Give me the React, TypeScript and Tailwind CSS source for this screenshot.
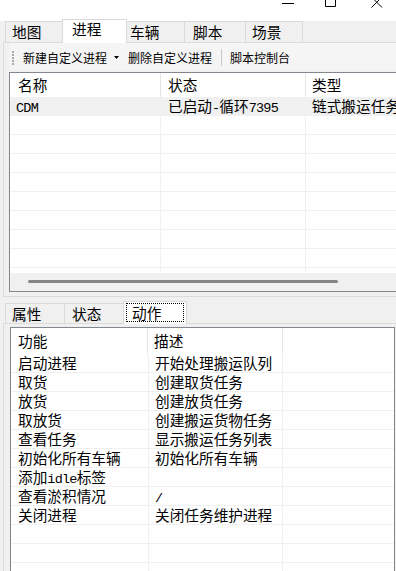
import React from "react";

// ---------------------------------------------------------------------------
// Data
// ---------------------------------------------------------------------------

const ACTIONS: [string, string][] = [
  ["启动进程", "开始处理搬运队列"],
  ["取货", "创建取货任务"],
  ["放货", "创建放货任务"],
  ["取放货", "创建搬运货物任务"],
  ["查看任务", "显示搬运任务列表"],
  ["初始化所有车辆", "初始化所有车辆"],
  ["添加idle标签", ""],
  ["查看淤积情况", "/"],
  ["关闭进程", "关闭任务维护进程"],
  ["", ""],
  ["", ""],
  ["", ""],
];

// ASCII runs are drawn in a half-width mono face, like SimSun
function Txt({ s }: { s: string }) {
  const parts = s.split(/([\x21-\x7e]+)/);
  return (
    <>
      {parts.map((p, i) =>
        i % 2 === 1 ? (
          <span key={i} className="font-['Liberation_Mono',monospace] text-[13.5px] tracking-[-0.77px] leading-[18px]">
            {p}
          </span>
        ) : (
          <React.Fragment key={i}>{p}</React.Fragment>
        ),
      )}
    </>
  );
}

// ---------------------------------------------------------------------------
// Pieces
// ---------------------------------------------------------------------------

function TitleButtons() {
  return (
    <div className="h-[21px] bg-white flex justify-end items-start pr-[13px] overflow-hidden">
      <svg width="12" height="8">
        <line x1="0" y1="3.5" x2="12" y2="3.5" stroke="#000" />
      </svg>
      <svg width="12" height="8" className="ml-[31px]">
        <path d="M0.5 -2 V6.5 H10.5 V-2" fill="none" stroke="#000" />
      </svg>
      <svg width="12" height="8" className="ml-[34px]">
        <path d="M0.5 -3 L11 7.5 M11 -3 L0.5 7.5" fill="none" stroke="#000" />
      </svg>
    </div>
  );
}

function Gripper() {
  return (
    <svg width="4" height="16" className="shrink-0">
      {[0, 1, 2, 3, 4].map((i) => (
        <rect key={i} x="1" y={i * 3 + 1} width="2" height="2" fill="#a8a8a8" />
      ))}
    </svg>
  );
}

// ---------------------------------------------------------------------------
// App
// ---------------------------------------------------------------------------

export default function App() {
  return (
    <div className="w-[396px] h-[571px] overflow-hidden bg-[#f0f0f0] text-black text-[14.67px] font-['Noto_Sans_CJK_SC','Noto_Sans',sans-serif]">
      <TitleButtons />

      {/* Upper tab strip */}
      <div className="flex items-start h-[21px] pl-[5px]">
        <div className="w-[60px] h-[21px] border border-b-0 border-[#d9d9d9] pl-[6px] leading-[20px]">地图</div>
        <div className="relative z-10 -ml-[3px] -mt-[2px] w-[65px] h-[24px] border border-b-0 border-[#d9d9d9] bg-white pl-[9px] leading-[18px]">
          进程
        </div>
        <div className="-ml-[2px] w-[60px] h-[21px] border border-b-0 border-[#d9d9d9] pl-[4px] leading-[20px]">车辆</div>
        <div className="-ml-px w-[62px] h-[21px] border border-b-0 border-[#d9d9d9] pl-[8px] leading-[20px]">脚本</div>
        <div className="-ml-px w-[58px] h-[21px] border border-b-0 border-[#d9d9d9] pl-[6px] leading-[20px]">场景</div>
      </div>

      {/* Upper tab page */}
      <div className="ml-[3px] h-[255px] border border-r-0 border-[#dcdcdc] flex flex-col">
        {/* Toolbar */}
        <div className="ml-[5px] h-[27px] shrink-0 flex items-center pt-[2px] bg-[#f5f5f5] text-[12px] whitespace-nowrap">
          <div className="ml-[2px]">
            <Gripper />
          </div>
          <span className="ml-[8px]">新建自定义进程</span>
          <svg width="6" height="4" className="ml-[7px] mt-[1px]">
            <path d="M0 0 H5 L2.5 3 Z" fill="#000" />
          </svg>
          <span className="ml-[8px]">删除自定义进程</span>
          <div className="ml-[9px] w-px h-[17px] bg-[#c8c8c8]" />
          <span className="ml-[8px]">脚本控制台</span>
        </div>

        {/* Process list */}
        <div className="ml-[5px] mt-[2px] h-[220px] shrink-0 border border-r-0 border-[#828790] bg-white flex flex-col">
          <div className="flex h-[24px] shrink-0 leading-[24px] whitespace-nowrap">
            <div className="w-[151px] shrink-0 border-r border-[#e5e5e5] pl-[8px]">名称</div>
            <div className="w-[145px] shrink-0 border-r border-[#e5e5e5] pl-[7px]">状态</div>
            <div className="pl-[6px]">类型</div>
          </div>
          <div className="h-[176px] shrink-0 overflow-hidden">
            {Array.from({ length: 10 }).map((_, r) => (
              <div
                key={r}
                className={[
                  "flex h-[19px] border-b border-[#f0f0f0] leading-[18px] whitespace-nowrap",
                  r === 0 ? "bg-[#f0f0f0]" : "",
                ].join(" ")}
              >
                <div className="w-[151px] shrink-0 border-r border-[#f0f0f0] pl-[6px]">
                  {r === 0 && <Txt s="CDM" />}
                </div>
                <div className="w-[145px] shrink-0 border-r border-[#f0f0f0] pl-[7px]">
                  {r === 0 && <Txt s="已启动-循环7395" />}
                </div>
                <div className="pl-[6px]">{r === 0 && "链式搬运任务"}</div>
              </div>
            ))}
          </div>
          {/* Horizontal scrollbar */}
          <div className="h-[18px] shrink-0 bg-[#f0f0f0] pt-[7px]">
            <div className="ml-[18px] w-[310px] h-[3px] rounded-full bg-[#858585]" />
          </div>
        </div>
      </div>

      {/* Lower tab strip */}
      <div className="flex items-start h-[20px] mt-[6px] pl-[5px]">
        <div className="w-[60px] h-[20px] border border-b-0 border-[#d9d9d9] pl-[6px] leading-[20px]">属性</div>
        <div className="-ml-px w-[61px] h-[20px] border border-b-0 border-[#d9d9d9] pl-[7px] leading-[20px]">状态</div>
        <div className="relative z-10 -ml-[2px] -mt-[2px] w-[64px] h-[23px] border border-b-0 border-[#d9d9d9] bg-white pt-px pl-[2px]">
          <div className="w-[58px] h-[19px] border border-dotted border-black pl-[5px] leading-[17px]">动作</div>
        </div>
      </div>

      {/* Lower tab page */}
      <div className="ml-[3px] border-t border-l border-[#dcdcdc] pt-[3px]">
        <div className="ml-[6px] mr-px border border-[#828790] bg-white">
          <div className="flex h-[26px] leading-[26px] whitespace-nowrap">
            <div className="w-[137px] shrink-0 border-r border-[#e5e5e5] pl-[7px]">功能</div>
            <div className="w-[135px] shrink-0 border-r border-[#e5e5e5] pl-[6px]">描述</div>
            <div />
          </div>
          {ACTIONS.map(([a, b], i) => (
            <div key={i} className="flex h-[19px] border-b border-[#f0f0f0] leading-[18px] whitespace-nowrap">
              <div className="w-[138px] shrink-0 border-r border-[#f0f0f0] pl-[7px]">
                <Txt s={a} />
              </div>
              <div className="w-[134px] shrink-0 border-r border-[#f0f0f0] pl-[6px]">
                <Txt s={b} />
              </div>
              <div />
            </div>
          ))}
        </div>
      </div>
    </div>
  );
}
